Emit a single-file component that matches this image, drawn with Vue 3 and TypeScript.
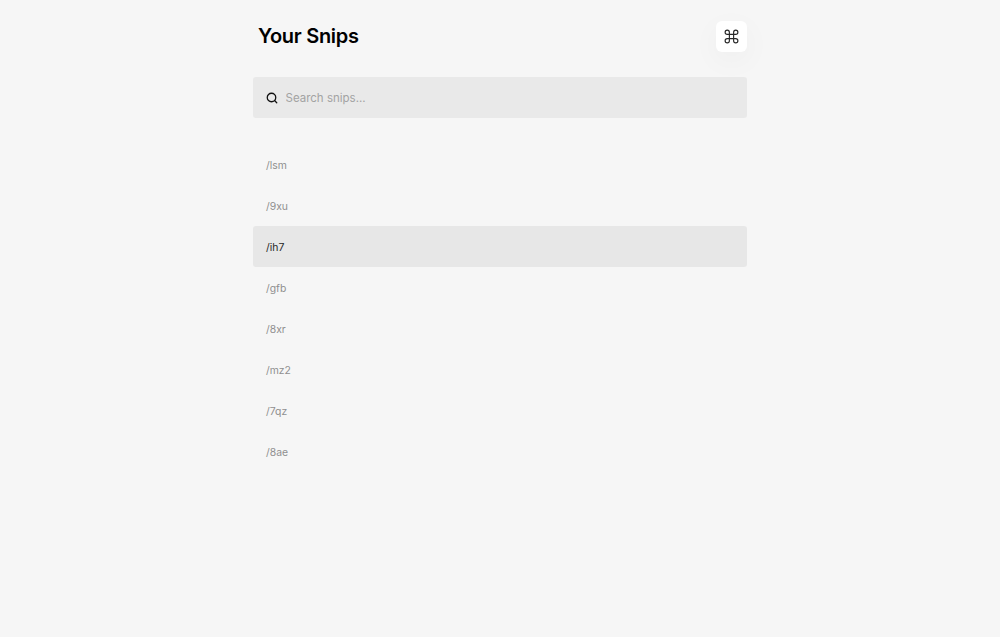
<script setup lang="ts">
const snips: string[] = ['lsm', '9xu', 'ih7', 'gfb', '8xr', 'mz2', '7qz', '8ae']
const activeSnip = 'ih7'
</script>

<template>
  <main class="page">
    <div class="column">
      <header class="header">
        <h1 class="title">Your Snips</h1>
        <button class="cmd-btn" type="button" aria-label="Command menu">
          <svg width="17" height="17" viewBox="0 0 24 24" fill="none" stroke="currentColor" stroke-width="1.6" stroke-linecap="round" stroke-linejoin="round">
            <path d="M15 6v12a3 3 0 1 0 3-3H6a3 3 0 1 0 3 3V6a3 3 0 1 0-3 3h12a3 3 0 1 0-3-3" />
          </svg>
        </button>
      </header>

      <label class="search">
        <svg width="12" height="12" viewBox="0 0 24 24" fill="none" stroke="currentColor" stroke-width="2.6" stroke-linecap="round" stroke-linejoin="round">
          <circle cx="11" cy="11" r="8.5" />
          <path d="m21.5 21.5-4.4-4.4" />
        </svg>
        <input class="search-input" type="text" placeholder="Search snips..." />
      </label>

      <ul class="list">
        <li
          v-for="snip in snips"
          :key="snip"
          class="row"
          :class="{ active: snip === activeSnip }"
        >
          /{{ snip }}
        </li>
      </ul>
    </div>
  </main>
</template>

<style>
html,
body {
  margin: 0;
  background: #f6f6f6;
}
</style>

<style scoped>
.page {
  min-height: 637px;
  box-sizing: border-box;
  display: flex;
  justify-content: center;
  background: #f6f6f6;
  font-family: Inter, "Liberation Sans", sans-serif;
}

.column {
  width: 494px;
  padding-top: 21px;
}

.header {
  display: flex;
  align-items: center;
  justify-content: space-between;
  height: 30px;
  padding-left: 5px;
}

.title {
  margin: 0;
  font-size: 20px;
  line-height: 30px;
  font-weight: 600;
  letter-spacing: -0.3px;
  color: #000;
}

.cmd-btn {
  width: 31px;
  height: 31px;
  padding: 0;
  display: flex;
  align-items: center;
  justify-content: center;
  border: 0;
  border-radius: 6px;
  background: #fff;
  color: #262626;
  box-shadow: 0 8px 30px rgba(0, 0, 0, 0.04);
}

.search {
  margin-top: 26px;
  height: 41px;
  padding: 0 13px;
  display: flex;
  align-items: center;
  gap: 7.5px;
  border-radius: 3px;
  background: #e9e9e9;
  color: #111;
}

.search-input {
  flex: 1;
  min-width: 0;
  padding: 0;
  border: 0;
  outline: 0;
  background: transparent;
  font: inherit;
  font-size: 11.5px;
  color: #111;
}

.search-input::placeholder {
  color: #a3a3a3;
  opacity: 1;
}

.list {
  margin: 26px 0 0;
  padding: 0;
  list-style: none;
}

.row {
  box-sizing: border-box;
  height: 41.1px;
  padding: 1px 13px 0;
  display: flex;
  align-items: center;
  border-radius: 3px;
  font-size: 10.4px;
  color: #8f8f8f;
}

.row.active {
  background: #e7e7e7;
  color: #262626;
}
</style>
